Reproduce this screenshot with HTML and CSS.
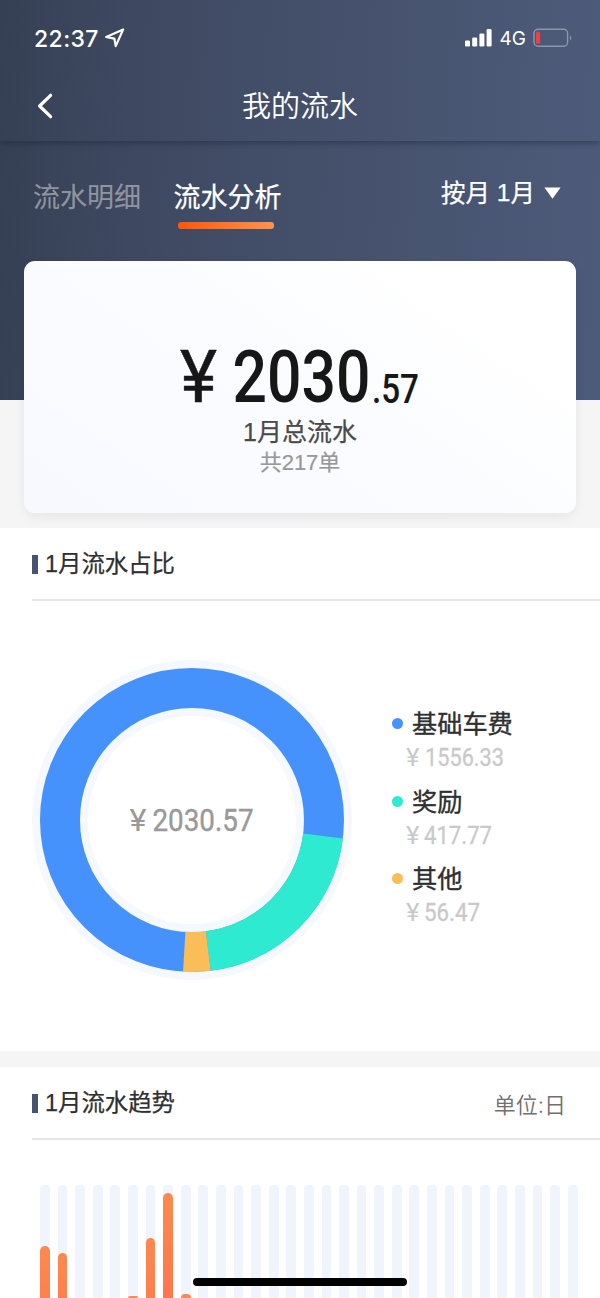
FILE: index.html
```html
<!DOCTYPE html>
<html lang="zh-CN">
<head>
<meta charset="utf-8">
<title>我的流水</title>
<link rel="stylesheet" href="styles.css">
</head>
<body>
<div class="screen">
  <header class="header">
    <div class="status">
      <div class="status-left">
        <span class="time">22:37</span>
        <svg class="location" width="20" height="20" viewBox="0 0 20 20"><path d="M18.2 1.4 1.2 9l8.2 1.7 1.3 7.4z"/></svg>
      </div>
      <div class="status-right">
        <svg class="signal" width="27" height="18" viewBox="0 0 27 18"><rect x="0" y="11.5" width="5" height="6" rx="1.3"/><rect x="7.2" y="8.5" width="5" height="9" rx="1.3"/><rect x="14.4" y="4.5" width="5" height="13" rx="1.3"/><rect x="21.6" y="0" width="5" height="17.5" rx="1.3"/></svg>
        <span class="network">4G</span>
        <svg class="battery" width="39" height="20" viewBox="0 0 39 20"><rect class="battery-shell" x="1" y="1.2" width="33.6" height="17" rx="4"/><path class="battery-cap" d="M37 7.5c1.7.8 1.7 4.2 0 5z"/><rect class="battery-level" x="3" y="3.6" width="4.2" height="12.2" rx="1.6"/></svg>
      </div>
    </div>
    <div class="navbar">
      <svg class="back" width="18" height="28" viewBox="0 0 18 28"><path d="M16.6 3.3 5.6 14 16.6 24.7"/></svg>
      <h1 class="title">我的流水</h1>
    </div>
  </header>
  <section class="hero">
    <nav class="tabs">
      <span class="tab">流水明细</span>
      <span class="tab active">流水分析</span>
      <span class="period">按月 <i>1</i>月<svg width="17" height="12" viewBox="0 0 17 12"><path d="M.4.4h16.2L8.5 11.8z"/></svg></span>
    </nav>
    <div class="card">
      <svg class="total" width="244" height="76" viewBox="0 0 244 76">
        <text class="yen" x="2" y="69" font-size="72" textLength="37" lengthAdjust="spacingAndGlyphs">¥</text>
        <text x="54.5" y="69" font-size="73" textLength="138" lengthAdjust="spacingAndGlyphs">2030</text>
        <text x="194" y="70" font-size="40" textLength="47" lengthAdjust="spacingAndGlyphs">.57</text>
      </svg>
      <div class="total-label"><i>1</i>月总流水</div>
      <div class="total-count">共<i>217</i>单</div>
    </div>
  </section>
  <section class="panel share">
    <div class="panel-head"><h2><i>1</i>月流水占比</h2></div>
    <div class="share-body">
      <svg class="donut" width="320" height="320" viewBox="-160 -160 320 320">
        <circle class="halo" r="132"/>
        <g transform="rotate(-90)">
          <circle class="slice base" r="132"/>
          <circle class="slice reward" r="132" pathLength="360" stroke-dasharray="75.9 284.1" stroke-dashoffset="-97"/>
          <circle class="slice other" r="132" pathLength="360" stroke-dasharray="10.5 349.5" stroke-dashoffset="-172.9"/>
        </g>
        <text class="yen" x="-62.5" y="11.3" font-size="31" textLength="17" lengthAdjust="spacingAndGlyphs">¥</text>
        <text x="-39.5" y="11.3" font-size="32" textLength="101" lengthAdjust="spacingAndGlyphs">2030.57</text>
      </svg>
      <ul class="legend">
        <li class="base"><span>基础车费</span>
          <svg width="110" height="32" viewBox="0 0 110 32"><text class="yen" x="1" y="25" textLength="13.5" lengthAdjust="spacingAndGlyphs">¥</text><text x="20" y="25" textLength="79" lengthAdjust="spacingAndGlyphs">1556.33</text></svg></li>
        <li class="reward"><span>奖励</span>
          <svg width="110" height="32" viewBox="0 0 110 32"><text class="yen" x="1" y="25" textLength="13.5" lengthAdjust="spacingAndGlyphs">¥</text><text x="19" y="25" textLength="68" lengthAdjust="spacingAndGlyphs">417.77</text></svg></li>
        <li class="other"><span>其他</span>
          <svg width="110" height="32" viewBox="0 0 110 32"><text class="yen" x="1" y="25" textLength="13.5" lengthAdjust="spacingAndGlyphs">¥</text><text x="19" y="25" textLength="56" lengthAdjust="spacingAndGlyphs">56.47</text></svg></li>
      </ul>
    </div>
  </section>
  <section class="panel trend">
    <div class="panel-head"><h2><i>1</i>月流水趋势</h2><span class="unit">单位:日</span></div>
    <div class="bars">
      <b><u style="height:52px"></u></b><b><u style="height:45px"></u></b><b></b><b></b><b></b><b><u style="height:2px"></u></b><b><u style="height:60px"></u></b><b><u style="height:105px"></u></b><b><u style="height:4px"></u></b><b></b><b></b><b></b><b></b><b></b><b></b><b></b><b></b><b></b><b></b><b></b><b></b><b></b><b></b><b></b><b></b><b></b><b></b><b></b><b></b><b></b><b></b>
    </div>
  </section>
  <div class="home-indicator"></div>
</div>
</body>
</html>
```
FILE: styles.css
```css
* { box-sizing: border-box; margin: 0; padding: 0; }
body { background: #fff; font-family: Inter, "Noto Sans CJK SC", sans-serif; color: #2e2f31; }
i { font-style: normal; font-family: "Liberation Sans", sans-serif; }
svg { display: block; flex: none; overflow: visible; }
svg text { font-family: Roboto, sans-serif; font-weight: 500; }

.screen { position: relative; width: 600px; height: 1298px; overflow: hidden; display: flex; flex-direction: column; background: #f5f5f5; }

.header { position: relative; z-index: 1; flex: none; height: 141px; color: #fff; background: linear-gradient(93deg, #364054 0%, #3e4861 22%, #46526d 60%, #4d5b7a 100%); box-shadow: 0 2px 6px rgba(20, 28, 48, .42); }
.status { height: 76px; padding: 0 28px 0 34px; display: flex; align-items: center; justify-content: space-between; }
.status-left, .status-right { display: flex; align-items: center; }
.time { padding-top: 1px; font-size: 23px; font-weight: 500; line-height: 28px; letter-spacing: .4px; }
.location { margin-left: 6px; fill: none; stroke: #fff; stroke-width: 2.2; stroke-linejoin: round; }
.signal { fill: #fff; }
.network { margin: 2px 7px 0 8px; font-size: 19px; line-height: 24px; }
.battery-shell { fill: none; stroke: #8c96ab; stroke-width: 1.4; }
.battery-cap { fill: #8c96ab; }
.battery-level { fill: #ee3f42; }
.navbar { height: 60px; padding: 0 34px; display: grid; grid-template-columns: 18px 1fr 18px; align-items: center; }
.back { fill: none; stroke: #fff; stroke-width: 3.2; stroke-linecap: round; stroke-linejoin: round; }
.title { padding-top: 1px; font-size: 29px; line-height: 40px; font-weight: 350; text-align: center; }

.hero { flex: none; height: 387px; padding: 32px 24px 0; background: linear-gradient(93deg, #364054 0%, #3e4861 22%, #46526d 60%, #4d5b7a 100%) 0 0 / 100% 259px no-repeat; }
.tabs { height: 88px; padding: 0 15px 0 9px; display: flex; align-items: flex-start; color: #fff; }
.tab { margin-right: 32.5px; padding-top: 5px; font-size: 27px; line-height: 40px; font-weight: 400; color: #8f949f; -webkit-text-stroke: .15px; }
.tab.active { color: #fff; -webkit-text-stroke: .25px; }
.tab.active::after { content: ""; display: block; width: 96px; height: 7px; margin: 4px 0 0 4px; border-radius: 3px; background: linear-gradient(90deg, #ff5706, #ff934f); }
.period { margin-left: auto; display: flex; align-items: center; white-space: pre; font-size: 24.5px; line-height: 40px; font-weight: 400; -webkit-text-stroke: .25px; }
.period svg { margin: 0 0 0 9px; fill: #fff; }
.card { height: 252px; padding-top: 72px; display: flex; flex-direction: column; align-items: center; border-radius: 11px; background: linear-gradient(35deg, #f7f9ff 0%, #fbfcff 50%, #fff 80%); box-shadow: 0 4px 12px rgba(0, 0, 0, .06); }
.total { fill: #171717; }
.total .yen { font-weight: 400; stroke: #171717; stroke-width: .5; }
.total-label { margin-top: 5px; font-size: 25px; line-height: 36px; color: #4a4a4a; font-weight: 400; -webkit-text-stroke: .25px; }
.total-count { font-size: 22px; line-height: 24px; color: #989898; -webkit-text-stroke: .2px; }

.panel { flex: none; background: #fff; }
.panel-head { margin-left: 32px; height: 73px; padding-right: 34px; display: flex; align-items: center; justify-content: space-between; border-bottom: 2px solid #e6e6e7; }
.panel-head h2 { padding-top: 1px; display: flex; align-items: center; font-size: 23.4px; line-height: 36px; font-weight: 400; -webkit-text-stroke: .25px; }
.panel-head h2::before { content: ""; width: 6px; height: 19px; margin-right: 7px; background: #465371; }
.unit { padding-top: 4px; font-size: 22px; line-height: 30px; font-weight: 350; color: #707070; }
.share { height: 523px; }
.share-body { padding: 59px 0 0 32px; display: flex; }
.halo { fill: none; stroke: #f5f8fc; stroke-width: 56; }
.slice { fill: none; stroke-width: 40; }
.slice.base { stroke: #4692fc; }
.slice.reward { stroke: #2eead0; }
.slice.other { stroke: #fabd58; }
.donut text { fill: #999; font-weight: 400; stroke: #999; stroke-width: .4; }
.legend { list-style: none; margin: 43px 0 0 40px; }
.legend li { height: 77.5px; display: grid; grid-template-columns: 12px 1fr; column-gap: 8px; align-content: start; align-items: center; font-size: 25.2px; line-height: 40px; font-weight: 400; -webkit-text-stroke: .35px; }
.legend li span { padding-top: 2px; line-height: 39px; }
.legend li::before { content: ""; width: 11px; height: 11px; border-radius: 50%; }
.legend .base::before { background: #4692fc; }
.legend .reward::before { background: #2eead0; }
.legend .other::before { background: #fabd58; }
.legend svg { grid-column: 1 / -1; margin: -3px 0 0 13px; fill: #c9c9c9; -webkit-text-stroke: 0; }
.legend text { font-size: 26.5px; font-weight: 400; stroke: #c9c9c9; stroke-width: .3; }
.legend .yen, .donut .yen { stroke-width: 0; }
.trend { height: 231px; margin-top: 16px; }
.bars { height: 113px; margin: 45px 22px 0 40px; display: flex; justify-content: space-between; }
.bars b { width: 9.8px; display: flex; align-items: flex-end; border-radius: 4px 4px 0 0; background: #f0f4fd; }
.bars u { width: 100%; border-radius: 5px 5px 0 0; background: linear-gradient(#fd894f, #ff754b 110px); }
.home-indicator { position: absolute; left: 193px; top: 1278px; width: 214px; height: 8px; border-radius: 4px; background: #000; }
```
